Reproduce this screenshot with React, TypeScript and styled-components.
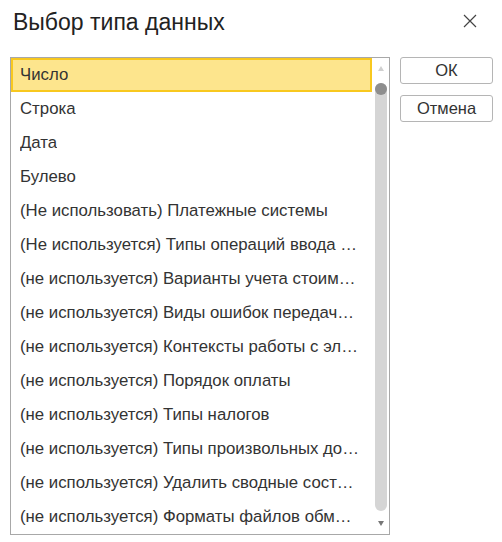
import React from "react";
import styled, { createGlobalStyle } from "styled-components";

const items = [
  "Число",
  "Строка",
  "Дата",
  "Булево",
  "(Не использовать) Платежные системы",
  "(Не используется)  Типы операций ввода остатков",
  "(не используется) Варианты учета стоимости",
  "(не используется) Виды ошибок передачи данных",
  "(не используется) Контексты работы с электронными документами",
  "(не используется) Порядок оплаты",
  "(не используется) Типы налогов",
  "(не используется) Типы произвольных документов",
  "(не используется) Удалить сводные состояния",
  "(не используется) Форматы файлов обмена",
];

const GlobalStyle = createGlobalStyle`
  body {
    margin: 0;
    background: #ffffff;
    font-family: "Liberation Sans", Arial, sans-serif;
    color: #333333;
  }
`;

const Window = styled.div`
  width: 502px;
  height: 542px;
  box-sizing: border-box;
  padding: 0 9px 0 10px;
  display: flex;
  flex-direction: column;
`;

const Header = styled.div`
  height: 57px;
  display: flex;
  align-items: flex-start;
  justify-content: space-between;
`;

const Title = styled.div`
  font-size: 23px;
  color: #222222;
  margin: 9px 0 0 3px;
`;

const CloseButton = styled.div`
  width: 14px;
  height: 14px;
  margin: 14px 16px 0 0;
  display: flex;
`;

const Body = styled.div`
  display: flex;
  gap: 10px;
`;

const ListBox = styled.div`
  width: 380px;
  height: 478px;
  box-sizing: border-box;
  border: 1px solid #a8a8a8;
  display: flex;
  overflow: hidden;
`;

const Rows = styled.div`
  flex: 1;
  min-width: 0;
  display: flex;
  flex-direction: column;
`;

const Row = styled.div<{ $selected?: boolean }>`
  height: 34px;
  flex-shrink: 0;
  box-sizing: border-box;
  padding: 0 ${(p) => (p.$selected ? 10 : 12)}px 1px ${(p) => (p.$selected ? 7 : 9)}px;
  display: flex;
  align-items: center;
  font-size: 16.8px;
  color: #333333;
  background: ${(p) => (p.$selected ? "#fde58d" : "transparent")};
  border: ${(p) => (p.$selected ? "2px solid #f8c81f" : "none")};
  white-space: nowrap;
  overflow: hidden;
`;

const RowText = styled.span`
  overflow: hidden;
  text-overflow: ellipsis;
  white-space: nowrap;
`;

const ScrollBar = styled.div`
  width: 17px;
  flex-shrink: 0;
  display: flex;
  flex-direction: column;
  align-items: center;
  padding: 8px 0 8px;
  box-sizing: border-box;
`;

const Arrow = styled.div<{ $down?: boolean }>`
  width: 0;
  height: 0;
  border-left: 3px solid transparent;
  border-right: 3px solid transparent;
  ${(p) =>
    p.$down
      ? "border-top: 5px solid #777777;"
      : "border-bottom: 5px solid #d0d0d0;"}
`;

const Track = styled.div`
  flex: 1;
  width: 12px;
  margin: 12px 0 10px;
  border-radius: 6px;
  background: #d5d5d5;
  position: relative;
`;

const ThumbCap = styled.div`
  position: absolute;
  top: 0;
  left: 0;
  width: 12px;
  height: 12px;
  border-radius: 50%;
  background: #8e8e8e;
`;

const Buttons = styled.div`
  display: flex;
  flex-direction: column;
  gap: 11px;
`;

const Button = styled.div`
  width: 93px;
  height: 27px;
  box-sizing: border-box;
  border: 1px solid #b5b5b5;
  border-radius: 3px;
  background: #ffffff;
  display: flex;
  align-items: center;
  justify-content: center;
  padding-bottom: 1px;
  font-size: 16.5px;
  color: #333333;
`;

const App = () => {
  return (
    <>
      <GlobalStyle />
      <Window>
        <Header>
          <Title>Выбор типа данных</Title>
          <CloseButton>
            <svg width="14" height="14" viewBox="0 0 14 14">
              <path d="M1 1 L13 13 M13 1 L1 13" stroke="#444" strokeWidth="1.2" fill="none" />
            </svg>
          </CloseButton>
        </Header>
        <Body>
          <ListBox>
            <Rows>
              {items.map((item, i) => (
                <Row key={i} $selected={i === 0}>
                  <RowText>{item}</RowText>
                </Row>
              ))}
            </Rows>
            <ScrollBar>
              <Arrow />
              <Track>
                <ThumbCap />
              </Track>
              <Arrow $down />
            </ScrollBar>
          </ListBox>
          <Buttons>
            <Button>ОК</Button>
            <Button>Отмена</Button>
          </Buttons>
        </Body>
      </Window>
    </>
  );
};

export default App;
